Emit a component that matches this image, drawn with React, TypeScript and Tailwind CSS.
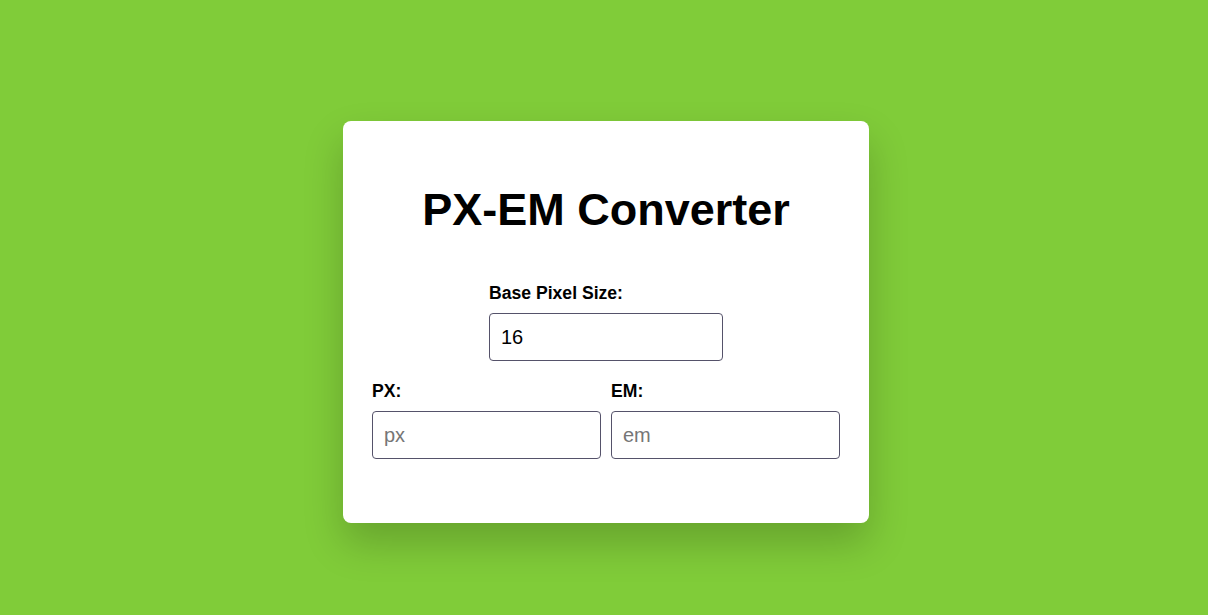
import { useState } from "react";

export default function App() {
  const [base, setBase] = useState("16");
  const [px, setPx] = useState("");
  const [em, setEm] = useState("");

  const b = parseFloat(base) || 16;

  return (
    <div
      className="min-h-screen w-full bg-[#80cc39] flex justify-center pt-[121px] pl-[4px]"
      style={{ fontFamily: '"Liberation Sans", Arial, sans-serif' }}
    >
      <div className="w-[526px] h-[402px] bg-white rounded-[8px] shadow-[0_20px_40px_rgba(0,0,0,0.2)] px-[29px] pt-[64px]">
        <h1 className="text-[45px] font-bold text-black text-center leading-[50px] mb-[48px]">
          PX-EM Converter
        </h1>

        <div className="w-[234px] mx-auto">
          <label className="block text-[17.6px] font-bold leading-[20px] mb-[10px] text-black">
            Base Pixel Size:
          </label>
          <input
            value={base}
            onChange={(e) => setBase(e.target.value)}
            className="w-full h-[48px] border border-[#55526a] rounded-[4px] px-[11px] text-[20px] text-black outline-none"
          />
        </div>

        <div className="grid grid-cols-2 gap-[10px] mt-[20px]">
          <div>
            <label className="block text-[17.6px] font-bold leading-[20px] mb-[10px] text-black">
              PX:
            </label>
            <input
              value={px}
              placeholder="px"
              onChange={(e) => {
                setPx(e.target.value);
                const v = parseFloat(e.target.value);
                setEm(isNaN(v) ? "" : String(v / b));
              }}
              className="w-full h-[48px] border border-[#55526a] rounded-[4px] px-[11px] text-[20px] text-black placeholder:text-[#767676] outline-none"
            />
          </div>
          <div>
            <label className="block text-[17.6px] font-bold leading-[20px] mb-[10px] text-black">
              EM:
            </label>
            <input
              value={em}
              placeholder="em"
              onChange={(e) => {
                setEm(e.target.value);
                const v = parseFloat(e.target.value);
                setPx(isNaN(v) ? "" : String(v * b));
              }}
              className="w-full h-[48px] border border-[#55526a] rounded-[4px] px-[11px] text-[20px] text-black placeholder:text-[#767676] outline-none"
            />
          </div>
        </div>
      </div>
    </div>
  );
}
